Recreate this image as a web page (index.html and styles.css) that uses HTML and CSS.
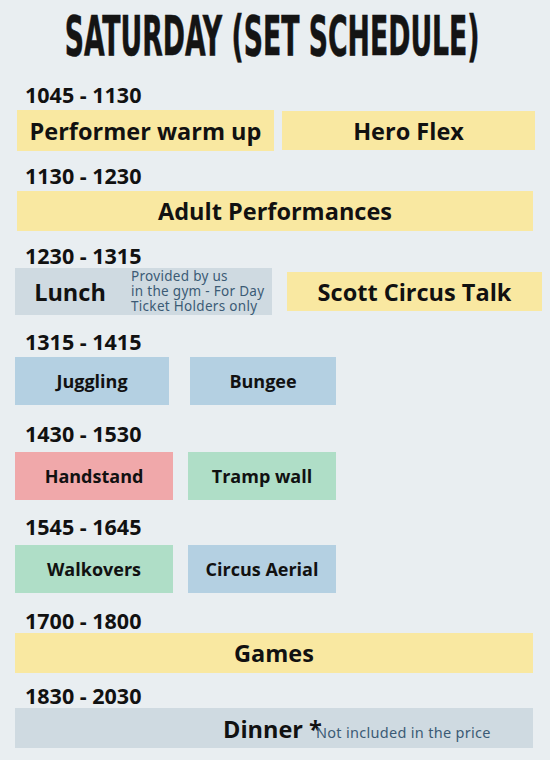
FILE: index.html
```html
<!DOCTYPE html>
<html lang="en">

<head>
    <meta charset="UTF-8">
    <meta name="viewport" content="width=device-width, initial-scale=1.0">
    <title>Saturday Schedule</title>
    <link rel="stylesheet" href="styles.css">
</head>

<body>
    <div class="page">
        <div class="title-wrap">
            <h1 class="title">SATURDAY (SET SCHEDULE)</h1>
        </div>

        <div class="slot first">
            <div class="time">1045 - 1130</div>
            <div class="row">
                <div class="box yellow big w-perf">Performer warm up</div>
                <div class="box yellow big w-hero">Hero Flex</div>
            </div>
        </div>

        <div class="slot">
            <div class="time">1130 - 1230</div>
            <div class="row">
                <div class="box yellow big w-full">Adult Performances</div>
            </div>
        </div>

        <div class="slot tight">
            <div class="time">1230 - 1315</div>
            <div class="row">
                <div class="box grey lunch">
                    <span class="lunch-label">Lunch</span>
                    <span class="note">Provided by us<br>in the gym - For Day<br>Ticket Holders only</span>
                </div>
                <div class="box yellow big w-scott">Scott Circus Talk</div>
            </div>
        </div>

        <div class="slot loose">
            <div class="time">1315 - 1415</div>
            <div class="row">
                <div class="box blue small w-jug">Juggling</div>
                <div class="box blue small w-bungee">Bungee</div>
            </div>
        </div>

        <div class="slot wide">
            <div class="time">1430 - 1530</div>
            <div class="row">
                <div class="box pink small w-left">Handstand</div>
                <div class="box green small w-right">Tramp wall</div>
            </div>
        </div>

        <div class="slot wide loose">
            <div class="time">1545 - 1645</div>
            <div class="row">
                <div class="box green small w-left">Walkovers</div>
                <div class="box blue small w-right">Circus Aerial</div>
            </div>
        </div>

        <div class="slot tight games">
            <div class="time">1700 - 1800</div>
            <div class="row">
                <div class="box yellow big w-games">Games</div>
            </div>
        </div>

        <div class="slot tight last">
            <div class="time">1830 - 2030</div>
            <div class="row">
                <div class="box grey big w-games dinner">
                    <span>Dinner *</span><span class="note dinner-note">Not included in the price</span>
                </div>
            </div>
        </div>
    </div>
</body>

</html>
```

FILE: styles.css
```css
body {
    margin: 0;
    background-color: #e9eef1;
    font-family: 'Open Sans', 'Noto Sans', sans-serif;
    color: #111;
}

.page {
    width: 550px;
    height: 760px;
    overflow: hidden;
}

.title-wrap {
    display: flex;
    justify-content: center;
    height: 70px;
    padding-top: 8px;
    padding-right: 6px;
    box-sizing: border-box;
}

.title {
    flex: none;
    margin: 0;
    font-family: 'Liberation Sans Narrow', 'DejaVu Sans Condensed', sans-serif;
    font-weight: 700;
    font-size: 55px;
    line-height: 56px;
    color: #141414;
    transform: scaleX(0.54);
    white-space: nowrap;
    -webkit-text-stroke: 0.6px #141414;
}

.slot {
    margin-top: 14px;
}

.slot.first {
    margin-top: 14px;
}

.slot.loose {
    margin-top: 16px;
}

.slot.wide {
    margin-top: 18px;
}

.slot.wide.loose {
    margin-top: 16px;
}

.slot.games {
    margin-top: 17px;
}

.slot.last {
    margin-top: 12px;
}

.time {
    margin-left: 25px;
    margin-bottom: 4px;
    font-weight: 700;
    font-size: 21.5px;
    line-height: 22px;
}

.slot.tight .time {
    margin-bottom: 1px;
}

.slot.wide .time {
    margin-bottom: 7px;
}

.row {
    display: flex;
    align-items: center;
    padding-left: 15px;
}

.box {
    display: flex;
    align-items: center;
    justify-content: center;
    font-weight: 700;
    box-sizing: border-box;
}

.big {
    font-size: 23.5px;
    height: 40px;
}

.small {
    font-size: 18px;
    height: 48px;
}

.yellow {
    background-color: #f9e8a1;
}

.blue {
    background-color: #b4d0e2;
}

.pink {
    background-color: #f0a8aa;
}

.green {
    background-color: #afdec7;
}

.grey {
    background-color: #cfdae1;
}

.w-perf {
    width: 257px;
    margin-left: 2px;
    height: 41px;
}

.w-hero {
    width: 253px;
    margin-left: 8px;
    height: 39px;
}

.w-full {
    width: 516px;
    margin-left: 2px;
}

.lunch {
    width: 257px;
    height: 47px;
    justify-content: flex-start;
}

.lunch-label {
    font-size: 23.5px;
    width: 110px;
    margin-right: 6px;
    text-align: center;
}

.note {
    font-family: 'Noto Sans', 'Open Sans', sans-serif;
    font-weight: 400;
    color: #3b5a75;
    font-size: 13.5px;
    line-height: 15px;
    letter-spacing: 0.3px;
    white-space: nowrap;
}

.w-scott {
    width: 255px;
    height: 39px;
    margin-left: 15px;
}

.w-jug {
    width: 154px;
}

.w-bungee {
    width: 146px;
    margin-left: 21px;
}

.w-left {
    width: 158px;
}

.w-right {
    width: 148px;
    margin-left: 15px;
}

.w-games {
    width: 518px;
}

.dinner {
    align-items: baseline;
    padding-top: 5px;
    justify-content: flex-start;
    padding-left: 208px;
}

.dinner-note {
    margin-left: -6px;
    font-size: 14.5px;
    letter-spacing: 0.3px;
}
```
